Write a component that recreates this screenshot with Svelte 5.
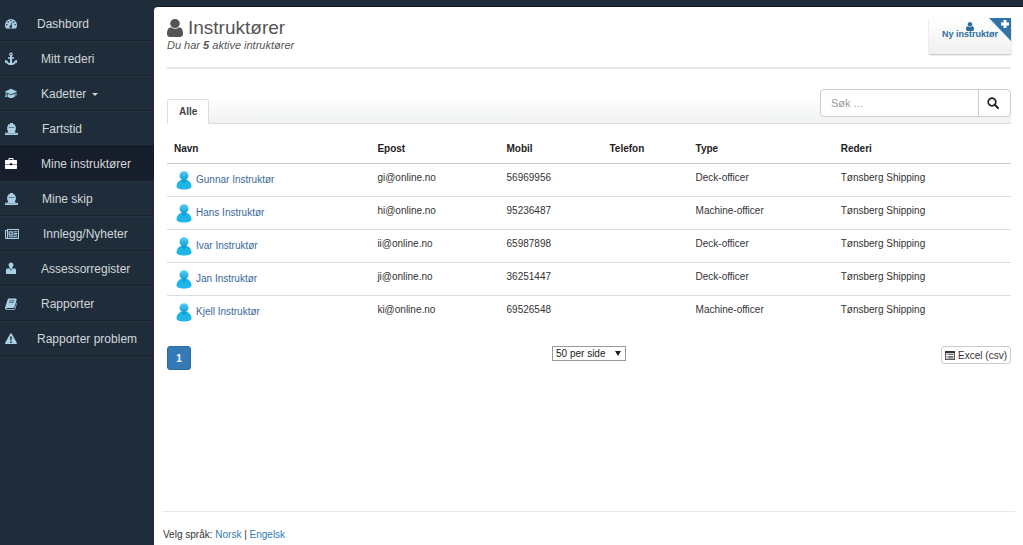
<script>
  const menu = [
    { label: 'Dashbord', icon: 'gauge', width: 12, href: '#dashbord', tight: true },
    { label: 'Mitt rederi', icon: 'anchor', width: 12, href: '#rederi' },
    { label: 'Kadetter', icon: 'cap', width: 12, href: '#kadetter', caret: true },
    { label: 'Fartstid', icon: 'ship', width: 13, href: '#fartstid' },
    { label: 'Mine instruktører', icon: 'case', width: 12, href: '#instruktorer' },
    { label: 'Mine skip', icon: 'ship', width: 13, href: '#skip' },
    { label: 'Innlegg/Nyheter', icon: 'news', width: 14, href: '#nyheter' },
    { label: 'Assessorregister', icon: 'assessor', width: 12, href: '#assessor' },
    { label: 'Rapporter', icon: 'book', width: 12, href: '#rapporter' },
    { label: 'Rapporter problem', icon: 'warning', width: 12, href: '#problem', tight: true }
  ]

  const instructors = [
    { name: 'Gunnar Instruktør', email: 'gi@online.no', mobile: '56969956', type: 'Deck-officer' },
    { name: 'Hans Instruktør', email: 'hi@online.no', mobile: '95236487', type: 'Machine-officer' },
    { name: 'Ivar Instruktør', email: 'ii@online.no', mobile: '65987898', type: 'Deck-officer' },
    { name: 'Jan Instruktør', email: 'ji@online.no', mobile: '36251447', type: 'Deck-officer' },
    { name: 'Kjell Instruktør', email: 'ki@online.no', mobile: '69526548', type: 'Machine-officer' }
  ]

  let active = $state('Mine instruktører')
  let search = $state('')
  let perPage = $state('50')

  const rows = $derived(
    instructors.filter((i) => i.name.toLowerCase().includes(search.toLowerCase()))
  )
</script>

{#snippet person()}
  <path d="M1536 1399q0 109-62.5 187t-150.5 78h-854q-88 0-150.5-78t-62.5-187q0-85 8.5-160.5t31.5-152 58.5-131 94-89 134.5-34.5q131 128 313 128t313-128q76 0 134.5 34.5t94 89 58.5 131 31.5 152 8.5 160.5zm-256-887q0 159-112.5 271.5t-271.5 112.5-271.5-112.5-112.5-271.5 112.5-271.5 271.5-112.5 271.5 112.5 112.5 271.5z" />
{/snippet}

{#snippet menuIcon(name, width)}
  <svg class="menu-icon" {width} height="14" viewBox="0 0 {width} 14" aria-hidden="true">
    {#if name === 'gauge'}
      <path fill-rule="evenodd" d="M0 8a6 6 0 0 1 12 0c0 1.500-.4 2.600-1.100 3.600H1.100C.4 10.600 0 9.500 0 8zM1.100 7.800a.8.8 0 1 0 1.600 0 .8.8 0 0 0-1.600 0zM2.400 5a.8.8 0 1 0 1.600 0 .8.8 0 0 0-1.600 0zM5.200 3.800a.8.8 0 1 0 1.600 0 .8.8 0 0 0-1.600 0zM8 5a.8.8 0 1 0 1.600 0A.8.8 0 0 0 8 5zM9.300 7.800a.8.8 0 1 0 1.600 0 .8.8 0 0 0-1.600 0zM6.700 5.400 5.700 8.300a1.300 1.300 0 1 0 .9.300l.9-3z" />
    {:else if name === 'anchor'}
      <path fill-rule="evenodd" d="M6 .5a1.900 1.900 0 0 1 1 3.500v1.200h2v1.600H7v4.300c1.300-.2 2.200-.7 2.700-1.300l-.9-.9L12 8v3.200l-.9-.8C10 12 8.200 13 6 13s-4-1-5.100-2.600l-.9.800V8l3.200.9-.9.900c.5.600 1.400 1.100 2.700 1.300V6.800H3V5.200h2V4A1.900 1.900 0 0 1 6 .5zm0 1.200a.7.7 0 1 0 0 1.400.7.7 0 0 0 0-1.400z" />
    {:else if name === 'cap'}
      <path d="M6 1.800 12.400 4.600 6 7.500 1.600 5.500v2.300l.5 2.200H.2l.5-2.200V5.100L-.4 4.600zM2.600 6.700 6 8.300l3.700-1.600v3C8.600 10.600 7.300 11 6 11s-2.500-.4-3.400-1.300zM10.400 6.300l1-.5v3l-1 .6z" />
    {:else if name === 'ship'}
      <path d="M5 1h3v1.200h1.800v1.300l1 1v3l-1.100 2.500 1.300.8H13V13H0v-2.200h2l1.300-.8-1.100-2.500v-3l1-1V2.200H5z" />
      <path class="cut" d="M3.800 5h5.400v.6H3.800zM.4 11.200h12.200v.4H.4z" />
    {:else if name === 'case'}
      <path fill-rule="evenodd" d="M3.500 3V2c0-.6.4-1 1-1h3c.6 0 1 .4 1 1v1h2.500c.6 0 1 .4 1 1v3H7.200v-.8H4.800V7H0V4c0-.6.4-1 1-1zm1.100 0h2.800V2H4.600zM0 7.400h4.800v.9h2.400v-.9H12V11c0 .6-.4 1-1 1H1c-.6 0-1-.4-1-1z" />
    {:else if name === 'news'}
      <path fill-rule="evenodd" d="M2 2h12v10H1.500C.6 12 0 11.500 0 10.500V3h2zm1 1v8h10V3zM1 4v6.500c0 .7 1 .7 1 0V4zM3.600 4.200h4.200v4.300H3.600zm1.200 1.200v1.900h1.800V5.400zM8.500 4.200h3.800v1H8.500zm0 1.700h3.800v1H8.500zm0 1.700h3.800v.9H8.500zM3.600 9.300h8.700v.9H3.600z" />
    {:else if name === 'assessor'}
      <path d="M6 .5a2.600 2.600 0 0 1 1.400 4.700L7 6.500h2.500c1.100 0 1.500.6 1.500 1.500v4H1V8c0-.9.400-1.500 1.500-1.500H5l-.4-1.300A2.600 2.600 0 0 1 6 .5z" />
      <path class="cut" d="m4.700 6.500 1.300 2.300 1.300-2.300L6.700 7H5.300z" />
    {:else if name === 'book'}
      <path fill-rule="evenodd" d="M4 1.500h6.600c.8 0 1.200.7 1 1.400l-2 7.100c-.2.700-.6 1-1.300 1H2.200c-.6 0-.8.5-.3.900h7c.6 0 .9-.3 1.100-.9l1.500-5.500.5.500-1.600 5.800c-.2.700-.7 1-1.400 1H1.700C.5 12.800-.3 11.500.2 10.300L2.500 3c.3-1 .7-1.500 1.500-1.500zm.5 2.100-.2.700h5l.2-.7zM4 5.400l-.2.700h5l.2-.7z" />
    {:else if name === 'warning'}
      <path fill-rule="evenodd" d="M5.200 1.700c.4-.7 1.200-.7 1.600 0l5 9c.4.700 0 1.300-.8 1.300H1c-.8 0-1.200-.6-.8-1.300zM5.100 4.500l.3 4h1.200l.3-4zm.1 4.900v1.500h1.600V9.400z" />
    {/if}
  </svg>
{/snippet}

<div class="page">
  <aside class="sidebar">
    <nav>
      {#each menu as item}
        <a
          href={item.href}
          class="menu-item"
          class:tight={item.tight}
          class:active={item.label === active}
          onclick={() => (active = item.label)}
        >
          {@render menuIcon(item.icon, item.width)}
          <span>{item.label}{#if item.caret}<i class="caret"></i>{/if}</span>
        </a>
      {/each}
    </nav>
  </aside>

  <main class="content">
    <header class="heading">
      <div>
        <h1>
          <svg width="16" height="18" viewBox="256 128 1280 1536" preserveAspectRatio="none" aria-hidden="true">{@render person()}</svg>
          Instruktører
        </h1>
        <p>Du har <strong>5</strong> aktive intruktører</p>
      </div>
      <button class="new-button" type="button">
        <svg class="new-person" width="8" height="9" viewBox="256 128 1280 1536" preserveAspectRatio="none" aria-hidden="true">{@render person()}</svg>
        <svg class="corner" width="22" height="23" viewBox="0 0 22 23" aria-hidden="true">
          <path fill="#2f74a8" d="M0 0h22v23z" />
          <path fill="#fff" d="M14.500 2h3v2.500H20v3h-2.500V10h-3V7.500H12v-3h2.500z" />
        </svg>
        <span>Ny instruktør</span>
      </button>
    </header>

    <div class="tab-bar">
      <button class="tab" type="button">Alle</button>
      <form class="search" onsubmit={(e) => e.preventDefault()}>
        <input type="text" placeholder="Søk ..." aria-label="Søk" bind:value={search} />
        <button type="submit" aria-label="Søk">
          <svg width="12" height="12" viewBox="0 0 12 12" aria-hidden="true">
            <circle cx="5" cy="5" r="3.800" fill="none" stroke="#222" stroke-width="1.700" />
            <path d="m7.800 7.800 3.200 3.200" stroke="#222" stroke-width="2" stroke-linecap="round" />
          </svg>
        </button>
      </form>
    </div>

    <table>
      <thead>
        <tr>
          <th class="col-name">Navn</th>
          <th class="col-email">Epost</th>
          <th class="col-mobile">Mobil</th>
          <th class="col-phone">Telefon</th>
          <th class="col-type">Type</th>
          <th>Rederi</th>
        </tr>
      </thead>
      <tbody>
        {#each rows as row}
          <tr>
            <td>
              <a class="name" href="#{row.mobile}">
                <svg width="16" height="19" viewBox="0 0 16 19" aria-hidden="true">
                  <defs>
                    <linearGradient id="avatar" x1="0" y1="0" x2="0" y2="1">
                      <stop offset="0" stop-color="#58cdf0" />
                      <stop offset="1" stop-color="#119fd8" />
                    </linearGradient>
                  </defs>
                  <path fill="#1fb5e6" d="M.5 15.200C.5 12 2.500 9.800 5.300 8.800h5.400c2.800 1 4.800 3.200 4.800 6.400 0 2.100-3.200 3.300-7.500 3.300S.5 17.300.5 15.200z" />
                  <path fill="#119fd8" d="M4.500 9.100h7L8 12.500z" />
                  <circle cx="8" cy="4.800" r="4.500" fill="url(#avatar)" />
                </svg>
                <span>{row.name}</span>
              </a>
            </td>
            <td>{row.email}</td>
            <td>{row.mobile}</td>
            <td></td>
            <td>{row.type}</td>
            <td>Tønsberg Shipping</td>
          </tr>
        {/each}
      </tbody>
    </table>

    <div class="table-footer">
      <div><button class="page-number" type="button">1</button></div>
      <div class="per-page">
        <select aria-label="Antall per side" bind:value={perPage}>
          <option value="50">50 per side</option>
          <option value="100">100 per side</option>
        </select>
        <span class="arrow"></span>
      </div>
      <button class="export" type="button">
        <svg width="10" height="9" viewBox="0 0 10 9" aria-hidden="true">
          <path fill="#333" fill-rule="evenodd" d="M0 0h10v9H0zm.8 2.300v5.900h8.400V2.300zM1.600 3.200h1v.8h-1zm1.700 0h5.100v.8H3.300zM1.600 4.900h1v.8h-1zm1.700 0h5.100v.8H3.300zM1.600 6.600h1v.8h-1zm1.700 0h5.100v.8H3.300z" />
        </svg>
        Excel (csv)
      </button>
    </div>

    <footer>
      Velg språk: <a href="#norsk">Norsk</a> | <a href="#engelsk">Engelsk</a>
    </footer>
  </main>
</div>

<style>
  :global(body) {
    margin: 0;
    background: #1f2d3a;
  }

  .page {
    display: flex;
    box-sizing: border-box;
    min-height: 100vh;
    padding-top: 6px;
    background: #1f2d3a;
    font-family: 'Liberation Sans', Arial, sans-serif;
    font-size: 10px;
    line-height: 14px;
    color: #333;
  }

  button,
  input,
  select {
    font-family: inherit;
    margin: 0;
  }

  a {
    color: #38699a;
    text-decoration: none;
  }

  /* Sidebar */
  .sidebar {
    flex: 0 0 154px;
  }

  .menu-item {
    display: flex;
    align-items: center;
    gap: 24px;
    box-sizing: border-box;
    height: 35px;
    padding-left: 5px;
    border-top: 1px solid #243443;
    border-bottom: 1px solid #18232e;
    font-size: 12px;
    color: #d3d7da;
    white-space: nowrap;
  }

  .menu-item:first-child {
    border-top-color: transparent;
  }

  .menu-item.tight {
    gap: 20px;
  }

  .menu-item.active {
    background: #161d2b;
    border-top-color: #111724;
  }

  .menu-icon {
    flex: none;
    fill: #a9d0e5;
  }

  .menu-icon .cut {
    fill: #1f2d3a;
  }

  .active .menu-icon {
    fill: #fff;
  }

  .caret {
    display: inline-block;
    margin-left: 6px;
    vertical-align: middle;
    border-top: 3px solid #d3d7da;
    border-left: 3px solid transparent;
    border-right: 3px solid transparent;
  }

  /* Content */
  .content {
    flex: 1;
    min-width: 0;
    display: flex;
    flex-direction: column;
    padding: 0 12px 0 13px;
    border-top: 1px solid #0f161d;
    border-top-left-radius: 4px;
    background: #fff;
  }

  .heading {
    display: flex;
    justify-content: space-between;
    align-items: flex-start;
    height: 49px;
    padding-top: 11px;
    border-bottom: 2px solid #e7e7e7;
  }

  h1 {
    display: flex;
    align-items: center;
    margin: 0;
    gap: 5px;
    height: 20px;
    font-size: 19px;
    font-weight: normal;
    color: #555;
  }

  h1 svg {
    fill: #555;
  }

  .heading p {
    margin: 0;
    font-size: 11px;
    font-style: italic;
    color: #555;
  }

  .new-button {
    position: relative;
    width: 82px;
    height: 36px;
    padding: 0 0 12px;
    border: 0;
    border-radius: 2px;
    background: linear-gradient(#fff, #f0f0f0);
    box-shadow: 0 1px 2px #bbb;
    font-size: 9px;
    font-weight: bold;
    line-height: 10px;
    color: #2f6d9f;
  }

  .new-button span {
    position: relative;
    display: block;
    margin-top: -2px;
  }

  .new-person {
    display: block;
    margin: 0 auto;
    fill: #2f6d9f;
  }

  .corner {
    position: absolute;
    top: 0;
    right: 0;
  }

  /* Tabs and search */
  .tab-bar {
    display: flex;
    justify-content: space-between;
    align-items: flex-end;
    height: 34px;
    margin-top: 20px;
    border-bottom: 1px solid #ddd;
    background: linear-gradient(#fff 20%, #f0f1f1);
  }

  .tab {
    height: 25px;
    margin-bottom: -1px;
    padding: 0 11px;
    border: 1px solid #ddd;
    border-bottom-color: #fff;
    border-radius: 3px 3px 0 0;
    background: #fff;
    font-size: 10px;
    font-weight: bold;
    color: #444;
  }

  .search {
    display: flex;
    width: 191px;
    height: 28px;
    margin-bottom: 6px;
  }

  .search input {
    flex: 1;
    min-width: 0;
    box-sizing: border-box;
    padding: 0 10px;
    border: 1px solid #ccc;
    border-radius: 4px 0 0 4px;
    font-size: 11px;
    color: #555;
  }

  .search input::placeholder {
    color: #999;
  }

  .search button {
    display: flex;
    align-items: center;
    justify-content: center;
    width: 33px;
    margin-left: -1px;
    padding: 0 4px 0 0;
    border: 1px solid #ccc;
    border-radius: 0 4px 4px 0;
    background: #fff;
  }

  /* Table */
  table {
    width: 100%;
    margin-top: 18px;
    border-collapse: separate;
    border-spacing: 0;
    table-layout: fixed;
  }

  th {
    box-sizing: border-box;
    padding: 0 7px 7px;
    border-bottom: 1px solid #ccc;
    text-align: left;
    color: #222;
  }

  td {
    height: 25px;
    padding: 7px 7px 0;
    border-bottom: 1px solid #ddd;
    vertical-align: top;
  }

  tr:last-child td {
    border-bottom: 0;
  }

  .col-name {
    width: 24.1%;
  }

  .col-email {
    width: 15.3%;
  }

  .col-mobile {
    width: 12.2%;
  }

  .col-phone {
    width: 10.2%;
  }

  .col-type {
    width: 17.2%;
  }

  .name {
    display: flex;
    align-items: flex-start;
    gap: 4px;
    padding-left: 2px;
  }

  .name span {
    padding-top: 2px;
  }

  .table-footer {
    display: grid;
    grid-template-columns: 1fr auto 1fr;
    align-items: start;
    margin: 18px 0;
  }

  .page-number {
    width: 24px;
    height: 24px;
    padding: 0;
    border: 1px solid #2e6da4;
    border-radius: 3px;
    background: #337ab7;
    font-size: 10px;
    font-weight: bold;
    color: #fff;
  }

  .per-page {
    position: relative;
  }

  select {
    appearance: none;
    display: block;
    width: 74px;
    height: 15px;
    padding: 0 3px;
    border: 1px solid #999;
    border-radius: 0;
    background: #fff;
    font-size: 10px;
    color: #222;
  }

  .arrow {
    position: absolute;
    top: 5px;
    right: 5px;
    border-top: 5px solid #222;
    border-left: 3px solid transparent;
    border-right: 3px solid transparent;
    pointer-events: none;
  }

  .export {
    justify-self: end;
    display: flex;
    align-items: center;
    gap: 3px;
    height: 18px;
    padding: 0 3px;
    border: 1px solid #ccc;
    border-radius: 3px;
    background: #fff;
    font-size: 10px;
    color: #333;
  }

  footer {
    margin: auto -4px 0;
    padding: 16px 0 3px;
    border-top: 1px solid #e7e7e7;
  }

  footer a {
    color: #337ab7;
  }
</style>
